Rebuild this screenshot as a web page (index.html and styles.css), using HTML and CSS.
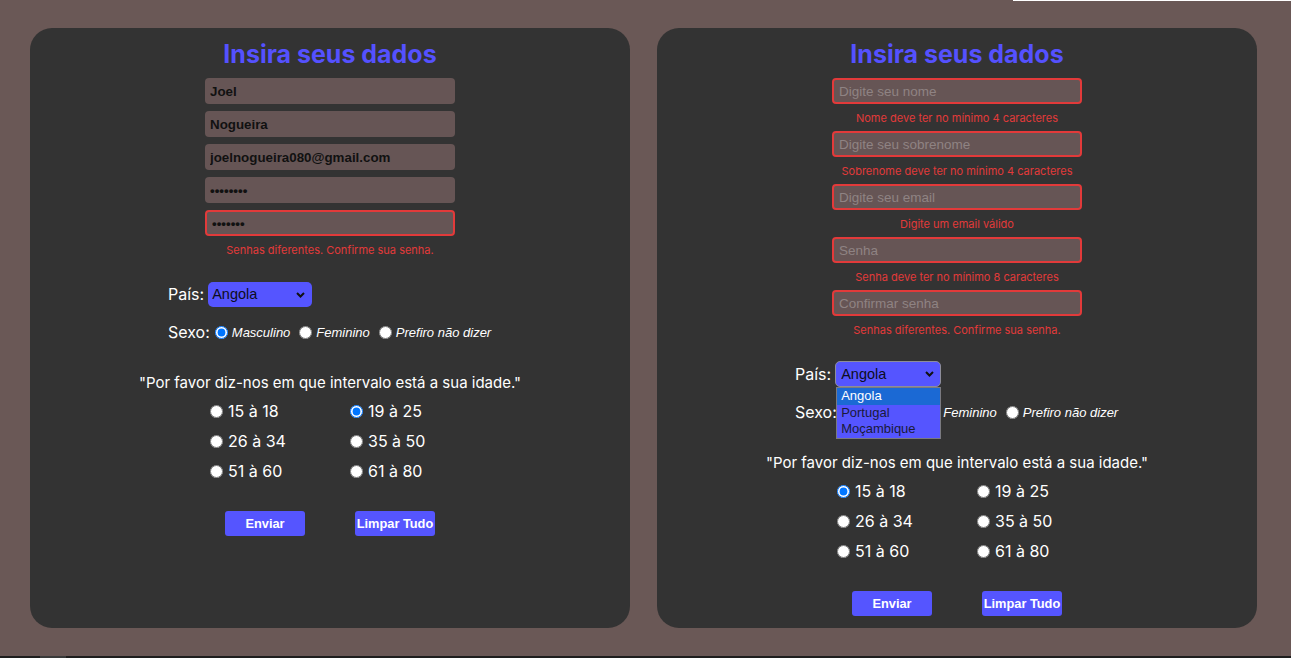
FILE: index.html
```html
<!DOCTYPE html>
<html lang="pt">
<head>
<meta charset="utf-8">
<title>Insira seus dados</title>
<link rel="stylesheet" href="styles.css">
</head>
<body>
<div class="topline"><div class="topline-white"></div></div>
<main class="page">
  <section class="card">
    <h1 class="title">Insira seus dados</h1>
    <div class="fields">
      <div class="field"><input class="inp" type="text" value="Joel" placeholder="Digite seu nome"></div>
      <div class="field"><input class="inp" type="text" value="Nogueira" placeholder="Digite seu sobrenome"></div>
      <div class="field"><input class="inp" type="text" value="joelnogueira080@gmail.com" placeholder="Digite seu email"></div>
      <div class="field"><input class="inp" type="password" value="12345678" placeholder="Senha"></div>
      <div class="field"><input class="inp inp-error" type="password" value="1234567" placeholder="Confirmar senha"><p class="err">Senhas diferentes. Confirme sua senha.</p></div>
    </div>
    <div class="row row-country">
      <span class="lbl">País:</span>
      <span class="sel-wrap">
        <select class="sel"><option>Angola</option><option>Portugal</option><option>Moçambique</option></select>
        <svg class="chev" width="9" height="6" viewBox="0 0 9 6"><path d="M1 1 L4.5 4.5 L8 1" fill="none" stroke="#111" stroke-width="2"/></svg>
      </span>
    </div>
    <div class="row row-sex">
      <span class="lbl">Sexo:</span>
      <label class="opt"><input type="radio" name="s1" checked><i>Masculino</i></label>
      <label class="opt"><input type="radio" name="s1"><i>Feminino</i></label>
      <label class="opt"><input type="radio" name="s1"><i>Prefiro não dizer</i></label>
    </div>
    <p class="quote">"Por favor diz-nos em que intervalo está a sua idade."</p>
    <div class="ages">
      <label class="age"><input type="radio" name="a1">15 à 18</label>
      <label class="age"><input type="radio" name="a1" checked>19 à 25</label>
      <label class="age"><input type="radio" name="a1">26 à 34</label>
      <label class="age"><input type="radio" name="a1">35 à 50</label>
      <label class="age"><input type="radio" name="a1">51 à 60</label>
      <label class="age"><input type="radio" name="a1">61 à 80</label>
    </div>
    <div class="actions"><button class="btn">Enviar</button><button class="btn">Limpar Tudo</button></div>
  </section>

  <section class="card">
    <h1 class="title">Insira seus dados</h1>
    <div class="fields">
      <div class="field"><input class="inp inp-error" type="text" placeholder="Digite seu nome"><p class="err">Nome deve ter no mínimo 4 caracteres</p></div>
      <div class="field"><input class="inp inp-error" type="text" placeholder="Digite seu sobrenome"><p class="err">Sobrenome deve ter no mínimo 4 caracteres</p></div>
      <div class="field"><input class="inp inp-error" type="text" placeholder="Digite seu email"><p class="err">Digite um email válido</p></div>
      <div class="field"><input class="inp inp-error" type="password" placeholder="Senha"><p class="err">Senha deve ter no mínimo 8 caracteres</p></div>
      <div class="field"><input class="inp inp-error" type="password" placeholder="Confirmar senha"><p class="err">Senhas diferentes. Confirme sua senha.</p></div>
    </div>
    <div class="row row-country">
      <span class="lbl">País:</span>
      <span class="sel-wrap">
        <select class="sel sel-open"><option>Angola</option><option>Portugal</option><option>Moçambique</option></select>
        <svg class="chev" width="9" height="6" viewBox="0 0 9 6"><path d="M1 1 L4.5 4.5 L8 1" fill="none" stroke="#111" stroke-width="2"/></svg>
        <ul class="dropdown">
          <li class="dd-item dd-active">Angola</li>
          <li class="dd-item">Portugal</li>
          <li class="dd-item">Moçambique</li>
        </ul>
      </span>
    </div>
    <div class="row row-sex">
      <span class="lbl">Sexo:</span>
      <label class="opt"><input type="radio" name="s2"><i>Masculino</i></label>
      <label class="opt"><input type="radio" name="s2"><i>Feminino</i></label>
      <label class="opt"><input type="radio" name="s2"><i>Prefiro não dizer</i></label>
    </div>
    <p class="quote">"Por favor diz-nos em que intervalo está a sua idade."</p>
    <div class="ages">
      <label class="age"><input type="radio" name="a2" checked>15 à 18</label>
      <label class="age"><input type="radio" name="a2">19 à 25</label>
      <label class="age"><input type="radio" name="a2">26 à 34</label>
      <label class="age"><input type="radio" name="a2">35 à 50</label>
      <label class="age"><input type="radio" name="a2">51 à 60</label>
      <label class="age"><input type="radio" name="a2">61 à 80</label>
    </div>
    <div class="actions"><button class="btn">Enviar</button><button class="btn">Limpar Tudo</button></div>
  </section>
</main>
<div class="bottomline"><div class="bottomline-seg"></div></div>
</body>
</html>
```

FILE: styles.css
```css
* { box-sizing: border-box; }
html, body { margin: 0; padding: 0; }
body {
  background: #6a5856;
  font-family: Inter, "Noto Sans", sans-serif;
  color: #fff;
  overflow: hidden;
}
.topline { height: 1px; display: flex; justify-content: flex-end; }
.topline-white { width: 278px; background: #fff; }
.page {
  display: flex;
  gap: 27px;
  padding: 27px 0 28px 30px;
}
.card {
  width: 600px;
  height: 600px;
  background: #333333;
  border-radius: 22px;
  padding-top: 11px;
  display: flex;
  flex-direction: column;
  align-items: flex-start;
}
.title {
  align-self: stretch;
  text-align: center;
  margin: 0;
  font-size: 25px;
  line-height: 30px;
  font-weight: 700;
  color: #5551ff;
}
.fields {
  margin: 9px 0 0 175px;
  width: 250px;
  display: flex;
  flex-direction: column;
  gap: 7px;
}
.field { display: flex; flex-direction: column; }
.inp {
  width: 250px;
  height: 26px;
  border: none;
  border-radius: 4px;
  background: #665555;
  padding: 0 5px;
  font-family: "Liberation Sans", Arial, sans-serif;
  font-size: 13.33px;
  font-weight: 700;
  color: #111;
  outline: none;
}
.inp::placeholder { color: #8f8383; font-weight: 400; font-size: 13.5px; }
.inp-error { border: 2px solid #e23a3a; }
.err {
  margin: 8px 0 0;
  line-height: 12px;
  font-size: 11px;
  color: #e23a3a;
  text-align: center;
  white-space: nowrap;
}
.row {
  margin-left: 138px;
  height: 26px;
  display: flex;
  align-items: center;
  font-size: 16px;
}
.row-country { margin-top: 25px; }
.row-country .lbl { margin-right: 4px; }
.row-sex { margin-top: 12px; }
.sel-wrap { position: relative; display: inline-flex; }
.sel {
  appearance: none;
  -webkit-appearance: none;
  width: 104px;
  height: 25px;
  border: none;
  border-radius: 5px;
  background: #5555ff;
  padding: 0 0 0 4px;
  font-family: "Liberation Sans", Arial, sans-serif;
  font-size: 14.5px;
  color: #0d0d20;
  outline: none;
}
.sel-open {
  width: 106px;
  height: 26px;
  border: 1px solid #8d8d9a;
  padding-left: 5px;
}
.chev { position: absolute; right: 7px; top: 10px; pointer-events: none; }
.dropdown {
  position: absolute;
  left: 1px;
  top: 26px;
  width: 105px;
  margin: 0;
  padding: 0;
  list-style: none;
  background: #5555ff;
  border: 1px solid #7a7a80;
  z-index: 5;
}
.dd-item {
  height: 16.5px;
  line-height: 16px;
  padding-left: 4px;
  font-family: "Liberation Sans", Arial, sans-serif;
  font-size: 13px;
  color: #1a1a3a;
}
.dd-active { background: #1b69d4; color: #fff; }
.opt {
  display: inline-flex;
  align-items: center;
  font-family: "Liberation Sans", Arial, sans-serif;
  font-size: 13px;
  margin-right: 4px;
}
.opt input { margin: 0 4px 0 5px; width: 13px; height: 13px; }
.quote {
  align-self: stretch;
  text-align: center;
  margin: 28px 0 0;
  line-height: 20px;
  font-size: 15px;
}
.ages {
  margin: 3px 0 0 180px;
  display: grid;
  grid-template-columns: 140px 140px;
  grid-auto-rows: 30px;
}
.age {
  display: flex;
  align-items: center;
  font-size: 16px;
}
.age input { margin: 0 5px 0 0; width: 13px; height: 13px; }
.actions {
  margin: 25px 0 0 195px;
  display: flex;
  gap: 50px;
}
.btn {
  width: 80px;
  height: 25px;
  border: none;
  border-radius: 3px;
  background: #5555ff;
  color: #fff;
  font-family: "Liberation Sans", Arial, sans-serif;
  font-size: 12.8px;
  font-weight: 700;
  padding: 0;
}
.bottomline { height: 2px; background: #1e1e1e; display: flex; }
.bottomline-seg { margin-left: 40px; width: 26px; background: #3a3a3a; }
```
